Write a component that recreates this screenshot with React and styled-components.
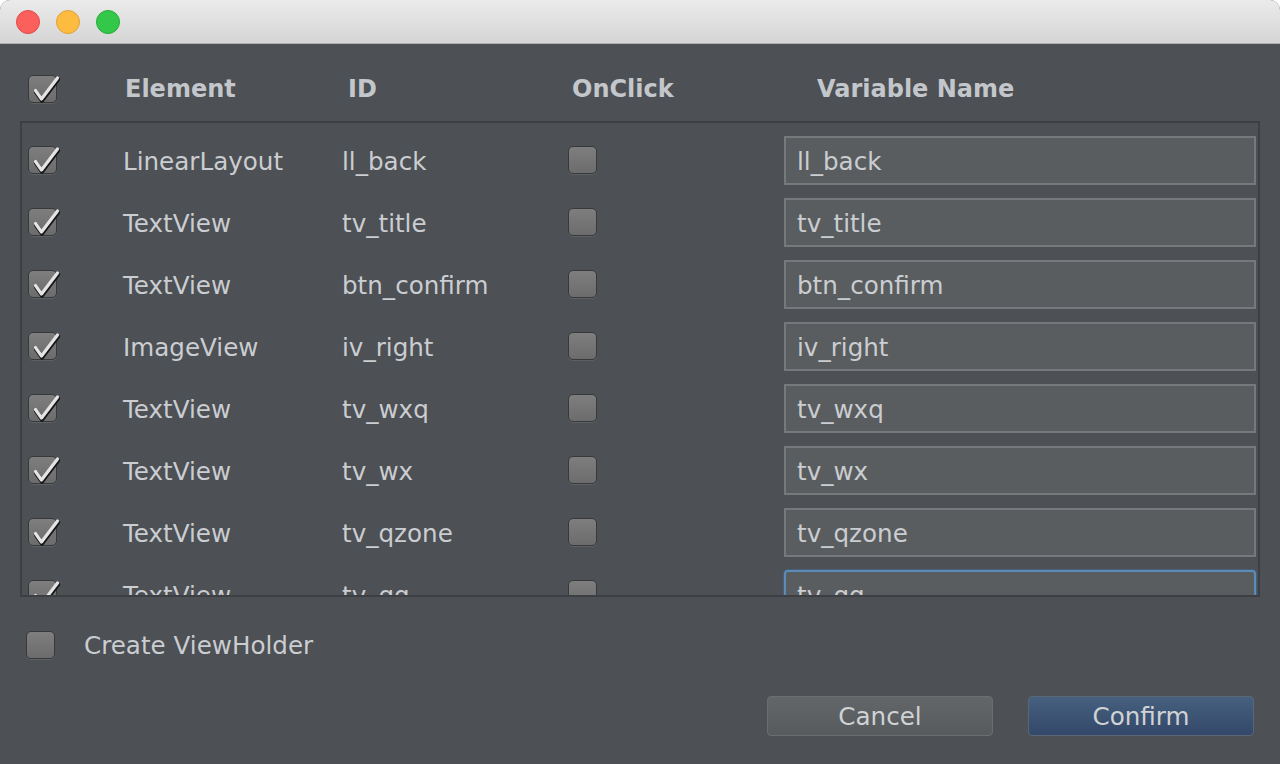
import styled, { createGlobalStyle } from "styled-components";

const GlobalStyle = createGlobalStyle`
  html, body {
    margin: 0;
    padding: 0;
    background: #ffffff;
    overflow: hidden;
  }
  * { box-sizing: border-box; }
`;

const Window = styled.div`
  width: 1280px;
  height: 764px;
  display: flex;
  flex-direction: column;
  background: #4d5054;
  border-radius: 10px 10px 0 0;
  overflow: hidden;
  font-family: "DejaVu Sans", "Liberation Sans", sans-serif;
  font-size: 24.6px;
  color: #cacdd1;
`;

const TitleBar = styled.div`
  height: 44px;
  flex: none;
  display: flex;
  align-items: center;
  gap: 16px;
  padding-left: 16px;
  background: linear-gradient(#ebebeb, #d5d5d5);
  border-bottom: 1px solid #b1b1b1;
`;

const Light = styled.span`
  width: 24px;
  height: 24px;
  border-radius: 50%;
  background: ${(p) => p.$fill};
  border: 1px solid ${(p) => p.$edge};
`;

const Body = styled.div`
  flex: 1;
  display: flex;
  flex-direction: column;
  padding: 29px 20px 0 20px;
`;

const HeaderRow = styled.div`
  display: grid;
  grid-template-columns: 97px 223px 224px 245px 1fr;
  align-items: center;
  height: 31px;
  padding-left: 8px;
  font-size: 24px;
  font-weight: bold;
  color: #c3c7cb;
`;

const HeaderCell = styled.span`
  padding-top: 1px;
`;

const Panel = styled.div`
  margin-top: 17px;
  height: 476px;
  border: 2px solid #3d3f42;
  overflow: hidden;
  padding-top: 6px;
`;

const Row = styled.div`
  display: grid;
  grid-template-columns: 95px 219px 226px 216px 472px;
  align-items: center;
  height: 62px;
  padding-left: 6px;
`;

const Cell = styled.span`
  padding-top: 2px;
`;

const Field = styled.div`
  height: 49px;
  display: flex;
  align-items: center;
  padding: 2px 0 0 11px;
  background: #5a5d5f;
  border: 2px solid ${(p) => (p.$focused ? "#5d8bb8" : "#76797b")};
  border-radius: ${(p) => (p.$focused ? "4px" : "0")};
  box-shadow: ${(p) => (p.$focused ? "0 0 0 1px #45607c" : "none")};
`;

const Box = styled.span`
  position: relative;
  display: inline-block;
  width: 29px;
  height: 28px;
  border-radius: 5px;
  border: 1px solid #38393a;
  background: linear-gradient(#7e7e7e, #6c6c6c);
  box-shadow: 0 1px 0 #5e6164;
  svg {
    position: absolute;
    left: -1px;
    top: -1px;
    overflow: visible;
  }
`;

const Footer = styled.div`
  display: flex;
  align-items: center;
  gap: 29px;
  margin-top: 32px;
  padding-left: 6px;
`;

const Buttons = styled.div`
  display: flex;
  justify-content: flex-end;
  gap: 35px;
  margin-top: 36px;
  padding-right: 6px;
`;

const Button = styled.button`
  width: 226px;
  height: 40px;
  padding: 0;
  border-radius: 4px;
  font-family: inherit;
  font-size: 24.6px;
  color: #d0d2d4;
  border: 1.5px solid ${(p) => (p.$primary ? "#5a6777" : "#6b6e70")};
  background: ${(p) =>
    p.$primary
      ? "linear-gradient(#46607f, #34486a)"
      : "linear-gradient(#626668, #585b5e)"};
`;

const tick = "M7.5 15.5 L13.5 24 L29.5 3";

function CheckBox({ checked }) {
  return (
    <Box>
      {checked && (
        <svg width="30" height="30" viewBox="0 0 30 30">
          <path d={tick} fill="none" stroke="#151515" strokeWidth="4.2" strokeLinecap="round" strokeLinejoin="round" transform="translate(0.5 1.5)" />
          <path d={tick} fill="none" stroke="#e4e4e4" strokeWidth="3.2" strokeLinecap="round" strokeLinejoin="round" />
        </svg>
      )}
    </Box>
  );
}

const rows = [
  ["LinearLayout", "ll_back"],
  ["TextView", "tv_title"],
  ["TextView", "btn_confirm"],
  ["ImageView", "iv_right"],
  ["TextView", "tv_wxq"],
  ["TextView", "tv_wx"],
  ["TextView", "tv_qzone"],
  ["TextView", "tv_qq"],
];

export default function App() {
  return (
    <>
      <GlobalStyle />
      <Window>
        <TitleBar>
          <Light $fill="#fc605c" $edge="#de4a45" />
          <Light $fill="#fdbc40" $edge="#dea034" />
          <Light $fill="#34c84a" $edge="#27aa35" />
        </TitleBar>
        <Body>
          <HeaderRow>
            <CheckBox checked />
            <HeaderCell>Element</HeaderCell>
            <HeaderCell>ID</HeaderCell>
            <HeaderCell>OnClick</HeaderCell>
            <HeaderCell>Variable Name</HeaderCell>
          </HeaderRow>
          <Panel>
            {rows.map(([el, id], i) => (
              <Row key={i}>
                <CheckBox checked />
                <Cell>{el}</Cell>
                <Cell>{id}</Cell>
                <CheckBox />
                <Field $focused={i === rows.length - 1}>{id}</Field>
              </Row>
            ))}
          </Panel>
          <Footer>
            <CheckBox />
            <Cell>Create ViewHolder</Cell>
          </Footer>
          <Buttons>
            <Button>Cancel</Button>
            <Button $primary>Confirm</Button>
          </Buttons>
        </Body>
      </Window>
    </>
  );
}
